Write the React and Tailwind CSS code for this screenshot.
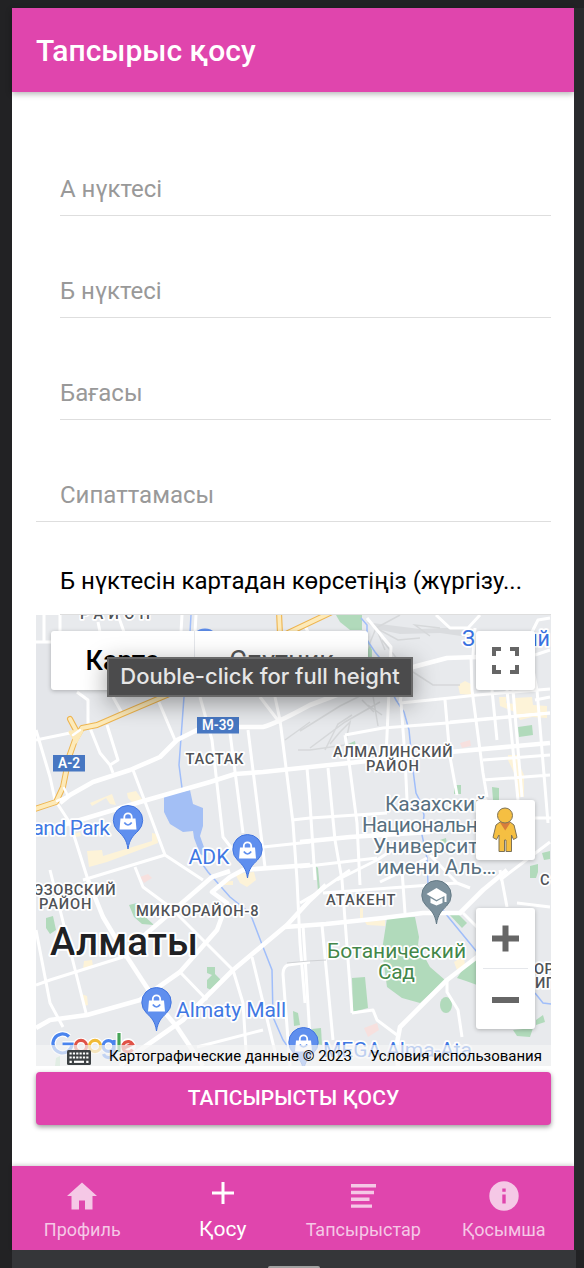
import React from "react";

const minorRoads = [
  "M44 615V641M36 642H60V615M60 642L80 641M182 615L181 632M196 615L195 632M98 622L100 632M118 615L124 632M304 624L309 634",
  "M36 740L70 733M77 692L88 700V723L100 753L110 765L113 773M107 725L118 760L110 765",
  "M36 730L50 777L55 800L70 823L88 880L103 917M113 697L122 713M158 700L175 740",
  "M200 697L212 740L223 837L233 850M230 733L243 833M248 730L265 867M260 697L280 723M275 697L280 720L293 823L297 880L300 943L305 1003",
  "M307 768L310 803L315 880M133 770L147 807L165 855L203 880M165 855L83 880M135 867L143 887L170 907L233 970L243 1003L247 1066",
  "M263 847L310 842M292 820L310 818L387 813M300 867L377 858M337 880L377 860L400 845",
  "M328 768L335 840L342 880L352 1013M349 762L357 823L360 885M345 735L383 728L447 723L550 713M345 735L349 762",
  "M367 618L391 647L386 757M401 703L405 757L407 800M445 700L450 757L457 795M400 703L401 697M400 703L450 698L477 695L550 689",
  "M471 655L472 690L483 773L487 797M492 690L497 740M507 690L518 800M513 690L522 797M537 690L548 823M483 760L550 755M483 780L550 775M450 722L550 713",
  "M535 818H551M500 880L550 842M535 700L550 697M530 655L537 690",
  "M36 985L50 980L123 957M36 930L50 1003L63 1027M50 870L87 1017M180 972L207 1000M252 957L277 1060M310 962L288 965Q283 967 283 974L290 1066M197 1047L263 1030",
  "M300 903L317 893L340 877L350 870M323 893L457 883L470 888M322 925L333 1040M303 925L310 1037M402 870L405 913M463 913L477 927M457 883L430 855",
  "M352 1013L373 1010L377 1020L397 1035M447 980V992L458 1010L462 1037M500 870L507 907M517 903L550 907M427 858L405 870L380 882",
  "M436 615L450 628H468L480 615M475 628L473 655M532 632L538 620L550 618M535 655L550 650",
];

const majorRoads = [
  "M36 833L80 820L140 802L210 782L235 774L263 772L310 767L349 763L450 752L550 743",
  "M60 803L70 795L93 782L130 770L160 757L177 740L197 730L230 727L263 727Q275 724 310 705L350 690L413 667L447 658L477 657",
  "M36 1028L50 1020L87 1015L140 1000L180 972L217 930L227 903L212 892L230 877L243 870L310 865",
  "M88 880L103 917L127 957L157 1003L177 1027L203 1066",
  "M123 957L147 933L197 890L212 877L230 871",
  "M326 885L310 900L287 925L233 970L203 1000L183 1020L130 1057L120 1066",
  "M285 927L326 924L383 918L423 913H460L483 890L507 870",
  "M477 957L447 980L400 1027L397 1043L398 1066",
  "M300 842L350 837L430 832",
];

const rails = [
  "M376 628L365 655M376 628L400 615M376 628L385 650M376 628L398 640L420 638M382 640L398 660M430 636L415 625L440 628",
  "M300 731L340 706L372 690M310 748L345 722L380 702M372 690L378 726M368 705L382 715M413 672L433 685H460M285 740L310 722M298 750H310L345 745M325 750L338 724L352 715M340 732L350 722L345 745M330 744L340 732M362 700L374 712",
];

const greens = [
  "M336 615H362V630H350L340 622Z",
  "M368 640L372 650V662H368Z",
  "M387 918L415 917L419 937L418 945L430 967L445 980L420 1003L402 998L387 987L382 950Z",
  "M352 978L365 977L368 1008L353 1012Z",
  "M457 978L465 966L477 958V985L466 981Z",
  "M448 913L458 914L467 923L462 928Z",
  "M513 1030L533 1028L530 1037L517 1036Z",
  "M518 727L532 725L533 735L519 737Z",
  "M454 785H461V794H454Z",
  "M492 787L499 788V800H493Z",
  "M542 853L550 851V859L544 860Z",
  "M530 866L538 864V872L536 878H530Z",
  "M46 918L53 916L56 930L50 934L46 928Z",
  "M129 905L137 903L140 912L154 925L142 924L134 917Z",
  "M207 967H215V974L221 980L211 990L207 988V980L212 975L207 973Z",
  "M293 1011L298 1013L300 1025L294 1026Z",
  "M56 1058L60 1056V1066H55Z",
  "M312 1029L321 1028L322 1045L316 1044Z",
  "M536 1020L543 1015L545 1022L536 1025Z",
  "M348 744L355 741L356 748H348Z",
  "M440 840L446 838L447 845H440Z",
  "M316 866L318 868L320 890L318 892Z",
];

const yellows = [
  "M90 803L112 794L116 805L110 804L106 798L92 806Z",
  "M127 793L136 791L143 801L135 805L128 798Z",
  "M87 851L102 850L103 856L152 841V833L157 834L158 843L107 862L89 867Z",
  "M235 874L254 872L256 880L247 887L240 883Z",
  "M220 882L233 881V885H224Z",
  "M84 961L92 960L93 967L83 969Z",
  "M81 994L87 996L88 1005L83 1006Z",
  "M458 685L465 681L471 684V695L460 694Z",
  "M499 697H506V703L515 704V698L532 697L533 705L547 706V718L532 717L520 720L515 712L500 706Z",
  "M508 755H518V762L524 775V797H516V777L508 760Z",
  "M365 922L385 920V926L367 925Z",
  "M454 962L464 956L465 966L457 970Z",
  "M360 908H363V920H360Z",
  "M74 834L80 832L81 836L76 837Z",
];

const streams = [
  "M191 615L189 650L184 697L179 765L182 788",
  "M203 865L208 872L230 897L250 913L263 947L272 970L273 1017L283 1040L290 1050",
  "M361 618L367 625V640L375 652L388 668L391 690L396 700L404 712L409 730L413 770L416 793L421 803L424 815L422 835L427 858L428 885L440 905L445 913L477 952",
  "M535 993L543 1003L551 1004",
];

function Label({ x, y, size, fill = "#505357", weight = 400, spacing = 0, width, anchor = "start", halo = 3.5, children }) {
  return (
    <text
      x={x}
      y={y}
      fontSize={size}
      fill={fill}
      fontWeight={weight}
      letterSpacing={spacing}
      textAnchor={anchor}
      textLength={width}
      stroke="#fff"
      strokeWidth={halo}
      strokeLinejoin="round"
      paintOrder="stroke"
    >
      {children}
    </text>
  );
}

function Pin({ x, y, school }) {
  return (
    <g transform={`translate(${x} ${y})`}>
      <path
        d="M0 0C-1.5-10-5-13-10-18A14.7 14.7 0 1 1 10-18C5-13 1.5-10 0 0Z"
        fill={school ? "#7b909c" : "#5f8fee"}
        stroke={school ? "#637985" : "#4275df"}
        strokeWidth="1"
      />
      {school ? (
        <g fill="#fff">
          <path d="M-10-30L0-36L10-30V-22H8V-28L0-24Z" />
          <path d="M-6-26L0-22.500L6-26V-21L0-18.500L-6-21Z" />
        </g>
      ) : (
        <g>
          <path d="M-7.500-30.500H7.500L8.500-19.500H-8.500Z" fill="#fff" />
          <path d="M-3.700-30V-32A3.700 3.700 0 0 1 3.700-32V-30" fill="none" stroke="#fff" strokeWidth="1.8" />
          <path d="M-3.700-26.500Q0-21.500 3.700-26.500" fill="none" stroke="#5f8fee" strokeWidth="1.700" />
        </g>
      )}
    </g>
  );
}

function RoadBadge({ x, y, width, children }) {
  return (
    <g>
      <rect x={x} y={y} width={width} height="16.500" fill="#4777c2" />
      <text x={x + width / 2} y={y + 13} fontSize="14" fontWeight="600" fill="#fff" textAnchor="middle" textLength={width - 10} lengthAdjust="spacingAndGlyphs">
        {children}
      </text>
    </g>
  );
}

function CityMap() {
  return (
    <svg viewBox="36 615 515 451" className="block h-[451px] w-[515px] font-[Roboto,sans-serif]">
      <rect x="36" y="615" width="515" height="451" fill="#e8eaed" />
      <path d="M36 643H77V692L88 703V723L70 732L36 740Z" fill="#e4e6ea" />
      <g fill="#fdf3d8">{yellows.map((d) => <path key={d} d={d} />)}</g>
      <g fill="#b1dabb">
        {greens.map((d) => <path key={d} d={d} />)}
        <ellipse cx="446" cy="1005" rx="6" ry="8" />
      </g>
      <g fill="#f7e0de">
        <path d="M460 743L470 740L471 746L462 748Z" />
        <path d="M140 877L148 874L152 878L144 883Z" />
        <path d="M364 1028L377 1023L379 1030L368 1037Z" />
      </g>
      <path d="M164 796L190 790L193 804L203 808V826L200 836L205 850L208 858L200 854L194 838L193 831L183 832L170 824L164 812Z" fill="#a3bff5" />
      <path d="M366 622L380 624L420 629L466 627L468 637L440 633L400 634L376 629Z" fill="#dadcdf" />
      <g fill="none" stroke="#d6d8da" strokeWidth="1.500">{rails.map((d) => <path key={d} d={d} />)}</g>
      <g fill="none" stroke="#a0befa" strokeWidth="1.500">{streams.map((d) => <path key={d} d={d} />)}</g>
      <g fill="none" stroke="#fff" strokeWidth="3" strokeLinejoin="round">{minorRoads.map((d) => <path key={d} d={d} />)}</g>
      <g fill="none" stroke="#fff" strokeWidth="4.600" strokeLinejoin="round">{majorRoads.map((d) => <path key={d} d={d} />)}</g>
      <path d="M287 963L309 961L326 960" fill="none" stroke="#d0d2d5" />
      <g fill="none" strokeLinejoin="round" strokeLinecap="round">
        <g stroke="#eeb550">
          <path d="M32 810L56 802L63 787L69 757L75 740L82 728L97 725L120 715L167 695L290 632L332 612" strokeWidth="6" />
          <path d="M70 719L78 734M279 612L280 634" strokeWidth="6" />
        </g>
        <g stroke="#fdeab9">
          <path d="M32 810L56 802L63 787L69 757L75 740L82 728L97 725L120 715L167 695L290 632L332 612" strokeWidth="4" />
          <path d="M70 719L78 734M279 612L280 634" strokeWidth="3.800" />
          <path d="M70 732L82 731L76 742Z" fill="#fdeab9" strokeWidth="3" />
        </g>
        <path d="M73 735L80 730M57 801L68 796L64 788" stroke="#fff" strokeWidth="2.500" />
      </g>
      <circle cx="205" cy="643" r="14.500" fill="#5f8fee" />

      <Label x="80" y="619" size="14.700" width="70" weight="500">РАЙОН</Label>
      <Label x="462" y="646" size="21.500" fill="#3871e0">З</Label>
      <Label x="550" y="646" size="21.500" fill="#3871e0" anchor="end">ий</Label>
      <RoadBadge x={197} y={717} width={42}>M-39</RoadBadge>
      <RoadBadge x={53} y={755} width={32}>A-2</RoadBadge>
      <Label x="185.500" y="764" size="14.700" width="58" weight="500">ТАСТАК</Label>
      <Label x="333" y="757" size="14.700" width="119.500" weight="500">АЛМАЛИНСКИЙ</Label>
      <Label x="366" y="770.500" size="14.700" width="53" weight="500">РАЙОН</Label>
      <g>
        <Label x="385" y="811" size="21" width="102" fill="#587080">Казахский</Label>
        <Label x="362" y="832" size="21" width="143" fill="#587080">Национальный</Label>
        <Label x="373" y="853" size="21" width="126" fill="#587080">Университет</Label>
        <Label x="377" y="874" size="21" width="119" fill="#587080">имени Аль…</Label>
      </g>
      <Label x="110" y="835" size="21" width="97" anchor="end" fill="#3f78e3">Grand Park</Label>
      <Label x="188.500" y="864" size="21" width="41" fill="#3f78e3">ADK</Label>
      <Pin x={128} y={849} />
      <Pin x={247.5} y={878} />
      <Label x="115.500" y="895" size="14.700" width="92" anchor="end" weight="500">УЭЗОВСКИЙ</Label>
      <Label x="39" y="908.500" size="14.700" width="52.500" weight="500">РАЙОН</Label>
      <Label x="136" y="916" size="14.700" width="122.500" weight="500">МИКРОРАЙОН-8</Label>
      <Label x="326" y="905" size="14.700" width="69.500" weight="500">АТАКЕНТ</Label>
      <Pin x={436.5} y={924} school />
      <Label x="50" y="955" size="38.500" width="148" weight="500" fill="#202124" halo={4}>Алматы</Label>
      <Label x="327" y="957.500" size="21" width="139" fill="#43874a">Ботанический</Label>
      <Label x="378" y="978.500" size="21" width="37" fill="#43874a">Сад</Label>
      <Label x="540" y="885" size="14.700" weight="500">С</Label>
      <Label x="534" y="974" size="14.700" spacing="0.500" weight="500">ОР</Label>
      <Label x="535" y="987.500" size="14.700" spacing="0.500" weight="500">ИП</Label>
      <Pin x={156.5} y={1031} />
      <Label x="176" y="1017" size="21" width="110" fill="#3f78e3">Almaty Mall</Label>
      <Pin x={303.5} y={1071} />
      <Label x="323" y="1057" size="21" width="149" fill="#3f78e3">MEGA Alma-Ata</Label>

      <g fill="none">
        <g stroke="#fff" strokeWidth="5.500">
          <path d="M69 1036.500A9.500 9.500 0 1 0 72 1044H62.500" />
          <circle cx="81" cy="1046" r="5.600" />
          <circle cx="95" cy="1046" r="5.600" />
          <circle cx="108.500" cy="1046" r="5.300" />
          <path d="M119 1032V1052" />
          <circle cx="128" cy="1046" r="5" />
        </g>
        <g strokeWidth="3.200">
          <path d="M69 1036.500A9.500 9.500 0 1 0 72 1044H62.500" stroke="#4a84ee" />
          <circle cx="81" cy="1046" r="5.600" stroke="#e05347" />
          <circle cx="95" cy="1046" r="5.600" stroke="#f1bb36" />
          <circle cx="108.500" cy="1046" r="5.300" stroke="#4a84ee" />
          <path d="M114 1040V1052Q113.500 1058 108 1057.500Q104.500 1057 103.500 1054" stroke="#4a84ee" />
          <path d="M119 1033V1052" stroke="#45a456" />
          <path d="M124 1048L132.500 1044A5.200 5.200 0 1 0 132.500 1049.500" stroke="#e05347" />
        </g>
      </g>
    </svg>
  );
}

function KeyboardIcon() {
  return (
    <svg viewBox="0 0 24 15" className="h-[15px] w-6">
      <rect width="24" height="15" rx="1.500" fill="#3c4043" />
      <path d="M2.500 3.500H21.500M2.500 7.500H21.500" stroke="#fff" strokeWidth="2.200" strokeDasharray="2.200 1.150" />
      <path d="M7 11.800H17" stroke="#fff" strokeWidth="2.200" />
      <path d="M2.500 11.800H4.800M19.200 11.800H21.500" stroke="#fff" strokeWidth="2.200" />
    </svg>
  );
}

function Pegman() {
  return (
    <svg viewBox="0 0 26 46" className="mr-0.5 h-[46px] w-[26px]">
      <path
        d="M8 15H18L22 18L25 30.500L21.500 32.500L19.500 28V44.500H14V33H12.500V44.500H7V28L4.500 32.500L1 30.500L4 18Z"
        fill="#f5bf42"
        stroke="#7d7257"
        strokeWidth="1"
      />
      <path d="M8 15.500H18.500L13.200 23.500Z" fill="#d87d3a" />
      <circle cx="13" cy="8.500" r="7.500" fill="#f5bf42" stroke="#7d7257" strokeWidth="1" />
    </svg>
  );
}

function MapPanel() {
  return (
    <div className="relative h-[451px] w-[515px] overflow-hidden">
      <CityMap />
      <div className="absolute left-[15px] top-4 flex h-[59px] w-[317px] overflow-hidden rounded-[3px] bg-white text-[27px] shadow-[0_1px_4px_rgba(0,0,0,0.25)]">
        <div className="flex w-[144px] items-center justify-center border-r border-gray-200 pt-0.5 font-medium text-black">Карта</div>
        <div className="flex flex-1 items-center justify-center pt-0.5 text-[#565656]">Спутник</div>
      </div>
      <div className="absolute left-[440px] top-4 flex size-[59px] items-center justify-center rounded-[3px] bg-white shadow-[0_1px_4px_rgba(0,0,0,0.25)]">
        <svg viewBox="0 0 27 27" className="size-[27px]" fill="none" stroke="#666" strokeWidth="4">
          <path d="M2 9V2H9M18 2H25V9M25 18V25H18M9 25H2V18" />
        </svg>
      </div>
      <div className="absolute left-[440px] top-[185px] flex h-[60px] w-[59px] items-center justify-center rounded-[3px] bg-white shadow-[0_1px_4px_rgba(0,0,0,0.25)]">
        <Pegman />
      </div>
      <div className="absolute left-[440px] top-[293px] flex h-[121px] w-[59px] flex-col items-center rounded-[3px] bg-white shadow-[0_1px_4px_rgba(0,0,0,0.25)]">
        <div className="flex h-[60px] items-center">
          <svg viewBox="0 0 27 27" className="size-[27px]" stroke="#666" strokeWidth="6">
            <path d="M0 13.500H27M13.500 0.500V26.500" />
          </svg>
        </div>
        <div className="h-px w-[45px] bg-gray-200" />
        <div className="flex h-[60px] items-center pt-px">
          <div className="h-1.5 w-[27px] bg-[#666]" />
        </div>
      </div>
      <div className="absolute inset-x-0 bottom-0 flex h-[21px] items-center text-[15px] leading-none text-black">
        <div className="flex h-full w-[64px] items-center bg-[#f5f5f5]/70 pl-[31px] pt-[3px]">
          <KeyboardIcon />
        </div>
        <div className="flex h-full flex-1 items-center justify-between bg-[#f5f5f5]/70 pl-[9px] pr-[9px] pt-0.5">
          <span className="whitespace-nowrap">Картографические данные © 2023</span>
          <span className="whitespace-nowrap">Условия использования</span>
        </div>
      </div>
      <div className="absolute left-[71px] top-[42px] flex h-10 w-[306px] items-center justify-center whitespace-nowrap border-2 border-[#686868] bg-[#4b4b4c] pb-0.5 font-[Inter,sans-serif] text-[22px] font-medium text-[#e6e6e6] shadow-[0_6px_24px_rgba(0,0,0,0.38)]">
        Double-click for full height
      </div>
    </div>
  );
}

function Field({ label }) {
  return (
    <div className="ml-6 flex h-[102px] items-end border-b border-[#dedede] pb-2.5 text-2xl text-[#999]">
      {label}
    </div>
  );
}

function Tab({ label, active, children }) {
  return (
    <div className={active ? "flex flex-1 flex-col items-center text-white" : "flex flex-1 flex-col items-center text-[#f5c8e6]"}>
      <svg viewBox="0 0 36 36" className={active ? "mt-[9px] size-9" : "mt-3 size-9"} fill="currentColor">
        {children}
      </svg>
      <span className={active ? "mt-[3px] text-[21px] leading-[30px]" : "mt-1 text-[18px] leading-6"}>{label}</span>
    </div>
  );
}

export default function App() {
  return (
    <div className="flex h-[1268px] w-[584px] flex-col bg-[#222224] pt-2 font-[Roboto,sans-serif]">
      <div className="flex flex-1">
        <div className="w-3" />
        <div className="flex h-[1242px] w-[562px] flex-col bg-white">
          <header className="flex h-[84px] items-center bg-[#e045ad] pl-6 text-[30px] font-medium text-white shadow-[0_2px_6px_rgba(0,0,0,0.3)]">
            Тапсырыс қосу
          </header>
          <main className="flex flex-1 flex-col pl-6 pr-[23px] pt-[22px]">
            <Field label="А нүктесі" />
            <Field label="Б нүктесі" />
            <Field label="Бағасы" />
            <div className="flex h-[102px] items-end border-b border-[#dedede] pb-2.5 pl-6 text-2xl text-[#999]">Сипаттамасы</div>
            <div className="ml-6 flex h-[93px] items-end whitespace-nowrap border-b border-[#dedede] pb-[17px] text-2xl text-black">
              Б нүктесін картадан көрсетіңіз (жүргізу...
            </div>
            <MapPanel />
            <button className="mt-1.5 h-[53px] w-full rounded-[4px] bg-[#e045ad] text-[21px] font-medium uppercase tracking-[0.1px] text-white shadow-[0_2px_5px_rgba(0,0,0,0.4)]">
              Тапсырысты қосу
            </button>
          </main>
          <nav className="flex h-[84px] bg-[#e045ad] shadow-[0_-1px_4px_rgba(0,0,0,0.2)]">
            <Tab label="Профиль">
              <path d="M15 31.500V22.500H21V31.500H28.500V18H33L18 4.500L3 18H7.500V31.500Z" />
            </Tab>
            <Tab label="Қосу" active>
              <path d="M29 19.500H19.500V29H16.500V19.500H7V16.500H16.500V7H19.500V16.500H29Z" />
            </Tab>
            <Tab label="Тапсырыстар">
              <path d="M6 6H31V9.500H6ZM6 12.800H29V16.200H6ZM6 19.600H24.500V23H6ZM6 26.400H27V29.800H6Z" />
            </Tab>
            <Tab label="Қосымша">
              <path fillRule="evenodd" d="M18 3.300A14.700 14.700 0 1 0 18 32.700A14.700 14.700 0 1 0 18 3.300ZM16.300 10.500H19.700V13.800H16.300ZM16.300 16.500H19.700V25.500H16.300Z" />
            </Tab>
          </nav>
        </div>
        <div className="w-2.5 bg-[#292a2d]" />
      </div>
      <div className="ml-3 flex h-[18px] w-[564px] shrink-0 items-end justify-center bg-[#353639]">
        <div className="h-0.5 w-[52px] rounded-t-sm bg-[#a2a2a2]" />
      </div>
    </div>
  );
}
